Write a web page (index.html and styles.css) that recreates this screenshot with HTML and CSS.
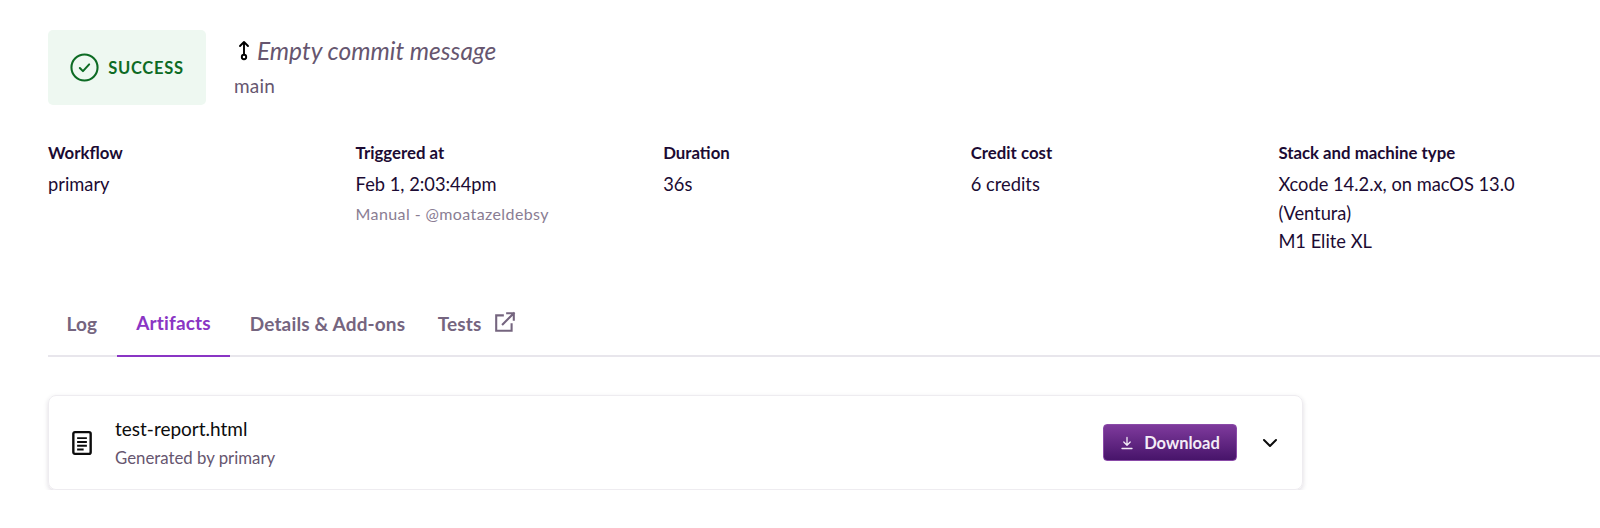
FILE: index.html
```html
<!DOCTYPE html>
<html lang="en">
<head>
  <meta charset="utf-8">
  <title>Job artifacts</title>
  <link rel="stylesheet" href="styles.css">
</head>
<body>
  <div class="summary">
    <div class="badge">
      <svg class="badge-icon" viewBox="0 0 28 28" fill="none" stroke="#0d6b24" stroke-width="2" stroke-linecap="round" stroke-linejoin="round"><circle cx="14" cy="14" r="12.6"/><path d="M9.5 14.5l3 3 6-6.5"/></svg>
      <span>SUCCESS</span>
    </div>
    <div class="commit">
      <div class="commit-msg">
        <svg class="commit-icon" viewBox="0 0 14 24" fill="none" stroke="#000" stroke-width="1.9" stroke-linecap="round" stroke-linejoin="round"><path d="M7 15V3M3 7l4-4 4 4"/><circle cx="7" cy="18" r="2.2"/></svg>
        <em>Empty commit message</em>
      </div>
      <div class="branch">main</div>
    </div>
  </div>

  <div class="meta">
    <div class="meta-col">
      <h4>Workflow</h4>
      <p>primary</p>
    </div>
    <div class="meta-col">
      <h4>Triggered at</h4>
      <p>Feb 1, 2:03:44pm</p>
      <p class="meta-sub">Manual - @moatazeldebsy</p>
    </div>
    <div class="meta-col">
      <h4>Duration</h4>
      <p>36s</p>
    </div>
    <div class="meta-col">
      <h4>Credit cost</h4>
      <p>6 credits</p>
    </div>
    <div class="meta-col">
      <h4>Stack and machine type</h4>
      <p>Xcode 14.2.x, on macOS 13.0 (Ventura)</p>
      <p>M1 Elite XL</p>
    </div>
  </div>

  <div class="tabs">
    <a class="tab tab-log">Log</a>
    <a class="tab active">Artifacts</a>
    <a class="tab">Details &amp; Add-ons</a>
    <a class="tab tab-tests">Tests
      <svg class="ext-icon" viewBox="0 0 20 20" fill="none" stroke="#75657f" stroke-width="1.9" stroke-linecap="square" stroke-linejoin="miter"><path d="M8 4H2v14h14v-6"/><path d="M8 12L18 2M12 2h6v6"/></svg>
    </a>
  </div>

  <div class="card">
    <svg class="file-icon" viewBox="0 0 20 24" fill="none" stroke="#0c0c0c" stroke-width="2.2" stroke-linejoin="round"><rect x="2" y="2" width="16" height="20" rx="1.5"/><path d="M5.5 7.5h9M5.5 11h9M5.5 14.5h9M5.5 18h6" stroke-width="1.8"/></svg>
    <div class="file-info">
      <div class="file-name">test-report.html</div>
      <div class="file-by">Generated by primary</div>
    </div>
    <button class="download">
      <svg viewBox="0 0 14 14" fill="none" stroke="#f3ecf6" stroke-width="1.3" stroke-linecap="round" stroke-linejoin="round"><path d="M7 1.5v7.5M3.8 6L7 9.2 10.2 6M2 12.5h10"/></svg>
      Download
    </button>
    <svg class="chevron" viewBox="0 0 16 10" fill="none" stroke="#0c0c0c" stroke-width="2" stroke-linecap="round" stroke-linejoin="round"><path d="M2 2l6 6 6-6"/></svg>
  </div>
</body>
</html>
```

FILE: styles.css
```css
body { margin: 0; padding: 30px 0 0 48px; font-family: "Lato", "Open Sans", sans-serif; color: #1c0b33; background: #fff; overflow: hidden; }
.summary { display: flex; gap: 28px; height: 75px; }
.badge { width: 158px; background: #eef8f1; border-radius: 5px; display: flex; align-items: center; justify-content: center; gap: 9px; color: #0d6b24; font-weight: 700; font-size: 16.5px; letter-spacing: 0.7px; }
.badge-icon { width: 29px; height: 29px; }
.commit { padding-top: 6px; }
.commit-msg { display: flex; align-items: center; gap: 6px; font-size: 24.5px; line-height: 30px; color: #66566f; }
.commit-icon { width: 14px; height: 24px; margin-left: 3px; }
.branch { font-size: 19px; line-height: 24px; margin-top: 8px; color: #66566f; letter-spacing: 0.2px; }
.meta { display: grid; grid-template-columns: repeat(5, 307.6px); margin-top: 36px; height: 148px; }
.meta-col h4 { margin: 0 0 5px; font-size: 16.8px; line-height: 24px; font-weight: 700; }
.meta-col p { margin: 0; font-size: 18.3px; line-height: 28.5px; width: 262px; }
.meta-col .meta-sub { font-size: 16px; line-height: 30px; color: #8a7d93; letter-spacing: 0.4px; width: auto; }
.tabs { display: flex; border-bottom: 2px solid #e8e6ec; height: 66px; align-items: stretch; }
.tab { display: flex; align-items: center; gap: 12px; padding: 0 19.5px; font-size: 19px; letter-spacing: 0.15px; font-weight: 700; color: #75657f; margin-bottom: -2px; }
.tab.active { color: #8a35c4; border-bottom: 2px solid #8a35c4; }
.tab-log { margin-left: -1px; }
.tab-tests { margin-left: -6.5px; }
.ext-icon { width: 22px; height: 22px; margin-top: -2px; }
.card { display: flex; align-items: center; width: 1255px; height: 95px; margin-top: 38px; box-sizing: border-box; border: 1px solid #eeecf0; border-radius: 8px; box-shadow: 0 2px 5px rgba(30, 10, 50, 0.14); padding: 0 24px 0 22px; }
.file-icon { width: 22px; height: 26px; }
.file-info { flex: 1; margin-left: 22px; }
.file-name { font-size: 19px; line-height: 26px; color: #0c0c0c; }
.file-by { font-size: 16.8px; line-height: 24px; margin-top: 4px; color: #66566f; }
.download { display: flex; align-items: center; justify-content: center; gap: 10px; width: 134px; height: 37px; border: 1px solid #8a4aa8; border-radius: 4px; background: linear-gradient(#7e3a9c, #47146a); color: #f3ecf6; font: 700 16.5px "Lato", sans-serif; }
.download svg { width: 14px; height: 14px; }
.chevron { width: 16px; height: 10px; margin-left: 25px; }
```
